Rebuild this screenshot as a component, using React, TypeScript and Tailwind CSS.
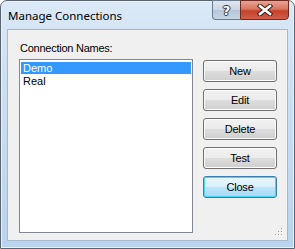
import React from "react";

const btn =
  "h-[22px] w-[74px] rounded-[3px] border border-[#707070] bg-[linear-gradient(#f2f2f2_0%,#ebebeb_50%,#dddddd_51%,#cfcfcf_100%)] shadow-[inset_0_0_0_1px_#fcfcfc] text-[11px] tracking-[-0.2px] text-black flex items-center justify-center";

export default function App() {
  return (
    <div className="w-[295px] h-[249px] bg-white" style={{ fontFamily: "'Liberation Sans', Arial, sans-serif" }}>
      <div className="w-[295px] h-[249px] rounded-t-[7px] border border-[#5a6470] bg-[linear-gradient(#dbe9f7_0%,#cde0f3_30%,#b9d3ee_100%)] flex flex-col shadow-[inset_0_0_0_1px_#e9f2fb]">
        <div className="h-[28px] flex items-start justify-between">
          <div className="pl-[7px] pt-[6px] text-[11.5px] text-black" style={{ fontFamily: "'Noto Sans', 'Open Sans', sans-serif" }}>
            Manage Connections
          </div>
          <div className="flex mr-[5px] -mt-px">
            <div className="w-[28px] h-[20px] rounded-bl-[4px] border border-[#6b7a8c] border-r-0 bg-[linear-gradient(#dfe7f0_0%,#c9d6e4_50%,#b6c6d8_51%,#c8d6e4_100%)] flex items-center justify-center">
              <span className="text-[13px] font-bold text-white leading-none" style={{ fontFamily: "'DejaVu Sans', sans-serif", textShadow: "0 0 1px #2b3b4f, 1px 0 0 #2b3b4f, -1px 0 0 #2b3b4f, 0 1px 0 #2b3b4f, 0 -1px 0 #2b3b4f" }}>?</span>
            </div>
            <div className="w-[49px] h-[20px] rounded-br-[4px] border border-[#6e2a22] bg-[linear-gradient(#e8a493_0%,#d9745f_45%,#c4402a_55%,#d1604a_100%)] flex items-center justify-center">
              <svg width="16" height="12" viewBox="0 0 16 12">
                <path d="M3 2 L13 10 M13 2 L3 10" stroke="#3a1a15" strokeWidth="4.5" strokeLinecap="square" />
                <path d="M3 2 L13 10 M13 2 L3 10" stroke="#ffffff" strokeWidth="2.6" strokeLinecap="square" />
              </svg>
            </div>
          </div>
        </div>
        <div className="ml-[6px] mr-[6px] mb-[7px] flex-1 border border-[#a6b8cc] bg-[#f0f0f0] relative">
          <div className="pl-[11px] pt-[12px] flex">
            <div className="flex flex-col">
              <div className="text-[11px] tracking-[-0.25px] text-black leading-[13px] h-[17px] pl-px">Connection Names:</div>
              <div className="w-[174px] h-[174px] border border-[#828790] bg-white px-px pt-[2px]">
                <div className="h-[12px] bg-[#3399ff] text-white text-[11px] leading-[12px] pl-[2px]">Demo</div>
                <div className="h-[13px] text-black text-[11px] leading-[14px] pl-[2px]">Real</div>
              </div>
            </div>
            <div className="ml-[10px] pt-[18px] flex flex-col gap-[7px]">
              <div className={btn}>New</div>
              <div className={btn}>Edit</div>
              <div className={btn}>Delete</div>
              <div className={btn}>Test</div>
              <div className="h-[22px] w-[74px] rounded-[3px] border border-[#3c7fb1] bg-[linear-gradient(#eaf6fd_0%,#d9f0fc_50%,#bee6fd_51%,#a7d9f5_100%)] shadow-[inset_0_0_0_1px_#48d3fb] text-[11px] tracking-[-0.2px] text-black flex items-center justify-center">Close</div>
            </div>
          </div>
          <svg className="absolute right-[3px] bottom-[3px]" width="10" height="10" viewBox="0 0 10 10">
            {[[7, 1], [4, 4], [7, 4], [1, 7], [4, 7], [7, 7]].map(([x, y], i) => (
              <g key={i}>
                <rect x={x + 1} y={y + 1} width="1" height="1" fill="#ffffff" />
                <rect x={x} y={y} width="1" height="1" fill="#a0a0a0" />
              </g>
            ))}
          </svg>
        </div>
      </div>
    </div>
  );
}
